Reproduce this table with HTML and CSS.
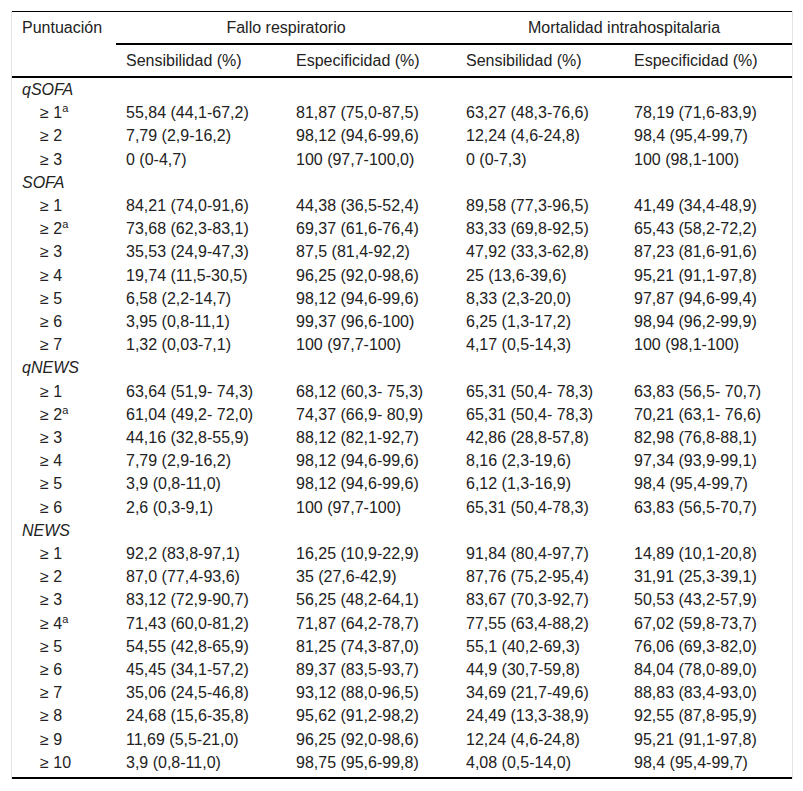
FILE: index.html
```html
<!DOCTYPE html>
<html lang="es">
<head>
<meta charset="utf-8">
<title>Tabla</title>
<link rel="stylesheet" href="styles.css">
</head>
<body>
<div class="wrap">
<table class="tbl">
<colgroup>
<col class="c1"><col class="c2"><col class="c3"><col class="c4"><col class="c5">
</colgroup>
<thead>
<tr>
<th rowspan="2" class="first">Puntuación</th>
<th colspan="2" class="group">Fallo respiratorio</th>
<th colspan="2" class="group">Mortalidad intrahospitalaria</th>
</tr>
<tr class="sub">
<th>Sensibilidad (%)</th>
<th>Especificidad (%)</th>
<th>Sensibilidad (%)</th>
<th>Especificidad (%)</th>
</tr>
</thead>
<tbody>
<tr class="grp"><td colspan="5">qSOFA</td></tr>
<tr><td class="lbl">≥ 1<sup>a</sup></td><td>55,84 (44,1-67,2)</td><td>81,87 (75,0-87,5)</td><td>63,27 (48,3-76,6)</td><td>78,19 (71,6-83,9)</td></tr>
<tr><td class="lbl">≥ 2</td><td>7,79 (2,9-16,2)</td><td>98,12 (94,6-99,6)</td><td>12,24 (4,6-24,8)</td><td>98,4 (95,4-99,7)</td></tr>
<tr><td class="lbl">≥ 3</td><td>0 (0-4,7)</td><td>100 (97,7-100,0)</td><td>0 (0-7,3)</td><td>100 (98,1-100)</td></tr>
<tr class="grp"><td colspan="5">SOFA</td></tr>
<tr><td class="lbl">≥ 1</td><td>84,21 (74,0-91,6)</td><td>44,38 (36,5-52,4)</td><td>89,58 (77,3-96,5)</td><td>41,49 (34,4-48,9)</td></tr>
<tr><td class="lbl">≥ 2<sup>a</sup></td><td>73,68 (62,3-83,1)</td><td>69,37 (61,6-76,4)</td><td>83,33 (69,8-92,5)</td><td>65,43 (58,2-72,2)</td></tr>
<tr><td class="lbl">≥ 3</td><td>35,53 (24,9-47,3)</td><td>87,5 (81,4-92,2)</td><td>47,92 (33,3-62,8)</td><td>87,23 (81,6-91,6)</td></tr>
<tr><td class="lbl">≥ 4</td><td>19,74 (11,5-30,5)</td><td>96,25 (92,0-98,6)</td><td>25 (13,6-39,6)</td><td>95,21 (91,1-97,8)</td></tr>
<tr><td class="lbl">≥ 5</td><td>6,58 (2,2-14,7)</td><td>98,12 (94,6-99,6)</td><td>8,33 (2,3-20,0)</td><td>97,87 (94,6-99,4)</td></tr>
<tr><td class="lbl">≥ 6</td><td>3,95 (0,8-11,1)</td><td>99,37 (96,6-100)</td><td>6,25 (1,3-17,2)</td><td>98,94 (96,2-99,9)</td></tr>
<tr><td class="lbl">≥ 7</td><td>1,32 (0,03-7,1)</td><td>100 (97,7-100)</td><td>4,17 (0,5-14,3)</td><td>100 (98,1-100)</td></tr>
<tr class="grp"><td colspan="5">qNEWS</td></tr>
<tr><td class="lbl">≥ 1</td><td>63,64 (51,9- 74,3)</td><td>68,12 (60,3- 75,3)</td><td>65,31 (50,4- 78,3)</td><td>63,83 (56,5- 70,7)</td></tr>
<tr><td class="lbl">≥ 2<sup>a</sup></td><td>61,04 (49,2- 72,0)</td><td>74,37 (66,9- 80,9)</td><td>65,31 (50,4- 78,3)</td><td>70,21 (63,1- 76,6)</td></tr>
<tr><td class="lbl">≥ 3</td><td>44,16 (32,8-55,9)</td><td>88,12 (82,1-92,7)</td><td>42,86 (28,8-57,8)</td><td>82,98 (76,8-88,1)</td></tr>
<tr><td class="lbl">≥ 4</td><td>7,79 (2,9-16,2)</td><td>98,12 (94,6-99,6)</td><td>8,16 (2,3-19,6)</td><td>97,34 (93,9-99,1)</td></tr>
<tr><td class="lbl">≥ 5</td><td>3,9 (0,8-11,0)</td><td>98,12 (94,6-99,6)</td><td>6,12 (1,3-16,9)</td><td>98,4 (95,4-99,7)</td></tr>
<tr><td class="lbl">≥ 6</td><td>2,6 (0,3-9,1)</td><td>100 (97,7-100)</td><td>65,31 (50,4-78,3)</td><td>63,83 (56,5-70,7)</td></tr>
<tr class="grp"><td colspan="5">NEWS</td></tr>
<tr><td class="lbl">≥ 1</td><td>92,2 (83,8-97,1)</td><td>16,25 (10,9-22,9)</td><td>91,84 (80,4-97,7)</td><td>14,89 (10,1-20,8)</td></tr>
<tr><td class="lbl">≥ 2</td><td>87,0 (77,4-93,6)</td><td>35 (27,6-42,9)</td><td>87,76 (75,2-95,4)</td><td>31,91 (25,3-39,1)</td></tr>
<tr><td class="lbl">≥ 3</td><td>83,12 (72,9-90,7)</td><td>56,25 (48,2-64,1)</td><td>83,67 (70,3-92,7)</td><td>50,53 (43,2-57,9)</td></tr>
<tr><td class="lbl">≥ 4<sup>a</sup></td><td>71,43 (60,0-81,2)</td><td>71,87 (64,2-78,7)</td><td>77,55 (63,4-88,2)</td><td>67,02 (59,8-73,7)</td></tr>
<tr><td class="lbl">≥ 5</td><td>54,55 (42,8-65,9)</td><td>81,25 (74,3-87,0)</td><td>55,1 (40,2-69,3)</td><td>76,06 (69,3-82,0)</td></tr>
<tr><td class="lbl">≥ 6</td><td>45,45 (34,1-57,2)</td><td>89,37 (83,5-93,7)</td><td>44,9 (30,7-59,8)</td><td>84,04 (78,0-89,0)</td></tr>
<tr><td class="lbl">≥ 7</td><td>35,06 (24,5-46,8)</td><td>93,12 (88,0-96,5)</td><td>34,69 (21,7-49,6)</td><td>88,83 (83,4-93,0)</td></tr>
<tr><td class="lbl">≥ 8</td><td>24,68 (15,6-35,8)</td><td>95,62 (91,2-98,2)</td><td>24,49 (13,3-38,9)</td><td>92,55 (87,8-95,9)</td></tr>
<tr><td class="lbl">≥ 9</td><td>11,69 (5,5-21,0)</td><td>96,25 (92,0-98,6)</td><td>12,24 (4,6-24,8)</td><td>95,21 (91,1-97,8)</td></tr>
<tr class="last"><td class="lbl">≥ 10</td><td>3,9 (0,8-11,0)</td><td>98,75 (95,6-99,8)</td><td>4,08 (0,5-14,0)</td><td>98,4 (95,4-99,7)</td></tr>
</tbody>
</table>
</div>
</body>
</html>
```
FILE: styles.css
```css
html, body {
  margin: 0;
  padding: 0;
  background: #fff;
}

body {
  font-family: "Liberation Sans", Arial, sans-serif;
  font-size: 16px;
  color: #222;
}

.wrap {
  margin: 11px 0 0 11px;
  width: 782px;
  box-sizing: border-box;
  border-left: 1px solid #e3e3e3;
  border-right: 1px solid #e3e3e3;
}

.tbl {
  width: 780px;
  table-layout: fixed;
  border-collapse: separate;
  border-spacing: 0;
  border-top: 1px solid #000;
  border-bottom: 2px solid #000;
}

.c1 { width: 104px; }
.c2 { width: 170px; }
.c3 { width: 170px; }
.c4 { width: 168px; }
.c5 { width: 168px; }

.tbl th {
  font-weight: normal;
  text-align: left;
  padding: 6px 10px;
  line-height: 19px;
  white-space: nowrap;
}

.tbl th.first {
  vertical-align: top;
  border-bottom: 2px solid #000;
}

.tbl th.group {
  text-align: center;
  border-bottom: 2px solid #000;
}

.tbl tr.sub th {
  border-bottom: 2px solid #000;
}

.tbl td {
  padding: 2px 10px;
  line-height: 19.2px;
  white-space: nowrap;
  vertical-align: middle;
}

.tbl tr.grp td {
  font-style: italic;
}

.tbl td.lbl {
  padding-left: 28px;
}

.tbl tr.last td {
  padding-bottom: 5px;
}

.tbl sup {
  font-size: 11px;
  line-height: 0;
  vertical-align: 6px;
}
```
